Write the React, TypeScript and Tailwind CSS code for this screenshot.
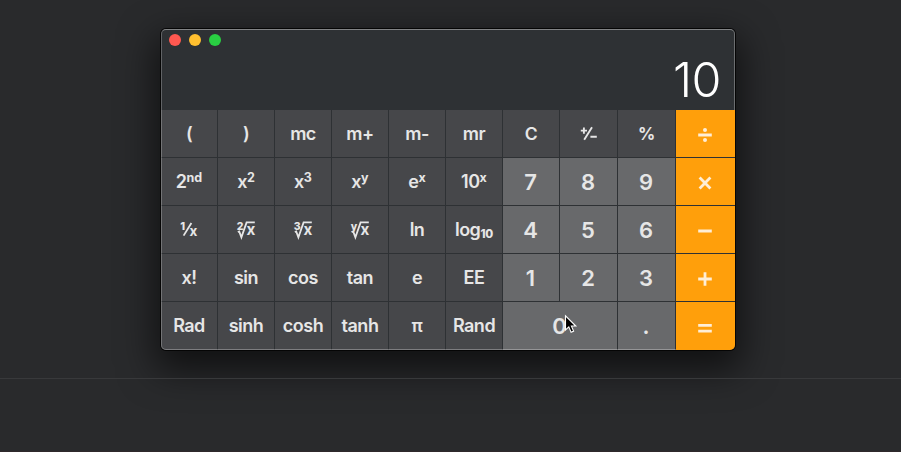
import type { ReactNode } from "react";

function Sup({ base, exp }: { base: string; exp: string }) {
  return (
    <span className="flex items-start">
      <span>{base}</span>
      <span className="-mt-[4px] text-[12.5px] font-bold leading-[18px] tracking-normal">{exp}</span>
    </span>
  );
}

function Root({ index }: { index: string }) {
  return (
    <svg width="20" height="20" viewBox="0 0 20 20" className="overflow-visible tracking-normal">
      <text x="0.8" y="9.6" fontSize="10.5" fontWeight="800" fill="currentColor">{index}</text>
      <path d="M1.8 12 L3.2 11.4 L5.4 17.4 L10.6 2.4 H18.8" fill="none" stroke="currentColor" strokeWidth="1.8" />
      <text x="10.4" y="15" fontSize="16" fontWeight="700" textLength="8.8" lengthAdjust="spacingAndGlyphs" fill="currentColor">x</text>
    </svg>
  );
}

function Reciprocal() {
  return (
    <svg width="20" height="20" viewBox="0 0 20 20" className="overflow-visible tracking-normal">
      <text x="1.2" y="10.4" fontSize="11" fontWeight="800" fill="currentColor">1</text>
      <path d="M4.6 15.6 L12.4 3" stroke="currentColor" strokeWidth="1.8" />
      <text x="10.4" y="15.8" fontSize="13.5" fontWeight="700" fill="currentColor">x</text>
    </svg>
  );
}

function Negate() {
  return (
    <svg width="20" height="20" viewBox="0 0 20 20" fill="none" stroke="currentColor" strokeWidth="1.9">
      <path d="M1.8 6.6 H8 M4.9 3.5 V9.7 M5.2 15.8 L13 3.2 M11.4 12.8 H17.8" />
    </svg>
  );
}

function Operator({ d, dots }: { d: string; dots?: boolean }) {
  return (
    <svg width="20" height="20" viewBox="0 0 20 20" fill="none" stroke="currentColor" strokeWidth="2.8" className="-translate-x-px">
      <path d={d} />
      {dots && (
        <>
          <circle cx="10" cy="5" r="2" fill="currentColor" stroke="none" />
          <circle cx="10" cy="15" r="2" fill="currentColor" stroke="none" />
        </>
      )}
    </svg>
  );
}

type Kind = "fn" | "num" | "op";

const kindClass: Record<Kind, string> = {
  fn: "bg-[#46474a] text-[18px] tracking-[-0.5px] font-semibold",
  num: "bg-[#68696b] text-[22px] font-semibold pr-px",
  op: "bg-[#ff9f0b] text-[#ffeed6] pt-[3px]",
};

const keys: { id: string; label: ReactNode; kind: Kind; wide?: boolean }[] = [
  { id: "open", label: "(", kind: "fn" },
  { id: "close", label: ")", kind: "fn" },
  { id: "mc", label: "mc", kind: "fn" },
  { id: "m+", label: "m+", kind: "fn" },
  { id: "m-", label: "m-", kind: "fn" },
  { id: "mr", label: "mr", kind: "fn" },
  { id: "c", label: <span className="text-[17.5px]">C</span>, kind: "fn" },
  { id: "neg", label: <Negate />, kind: "fn" },
  { id: "pct", label: <span className="pt-px text-[17px] font-bold">%</span>, kind: "fn" },
  { id: "div", label: <Operator d="M3.2 10 H16.8" dots />, kind: "op" },

  { id: "2nd", label: <Sup base="2" exp="nd" />, kind: "fn" },
  { id: "x2", label: <Sup base="x" exp="2" />, kind: "fn" },
  { id: "x3", label: <Sup base="x" exp="3" />, kind: "fn" },
  { id: "xy", label: <Sup base="x" exp="y" />, kind: "fn" },
  { id: "ex", label: <Sup base="e" exp="x" />, kind: "fn" },
  { id: "10x", label: <Sup base="10" exp="x" />, kind: "fn" },
  { id: "7", label: "7", kind: "num" },
  { id: "8", label: "8", kind: "num" },
  { id: "9", label: "9", kind: "num" },
  { id: "mul", label: <Operator d="M4.6 4.6 L15.4 15.4 M15.4 4.6 L4.6 15.4" />, kind: "op" },

  { id: "inv", label: <Reciprocal />, kind: "fn" },
  { id: "r2", label: <Root index="2" />, kind: "fn" },
  { id: "r3", label: <Root index="3" />, kind: "fn" },
  { id: "ry", label: <Root index="y" />, kind: "fn" },
  { id: "ln", label: "ln", kind: "fn" },
  {
    id: "log",
    label: (
      <span className="flex items-end">
        <span>log</span>
        <span className="-mb-[4px] text-[11.5px] font-extrabold leading-[18px] tracking-[-0.2px]">10</span>
      </span>
    ),
    kind: "fn",
  },
  { id: "4", label: "4", kind: "num" },
  { id: "5", label: "5", kind: "num" },
  { id: "6", label: "6", kind: "num" },
  { id: "sub", label: <Operator d="M3.2 10 H16.8" />, kind: "op" },

  { id: "fact", label: "x!", kind: "fn" },
  { id: "sin", label: "sin", kind: "fn" },
  { id: "cos", label: "cos", kind: "fn" },
  { id: "tan", label: "tan", kind: "fn" },
  { id: "e", label: "e", kind: "fn" },
  { id: "ee", label: "EE", kind: "fn" },
  { id: "1", label: "1", kind: "num" },
  { id: "2", label: "2", kind: "num" },
  { id: "3", label: "3", kind: "num" },
  { id: "add", label: <Operator d="M3.2 10 H16.8 M10 3.2 V16.8" />, kind: "op" },

  { id: "rad", label: "Rad", kind: "fn" },
  { id: "sinh", label: "sinh", kind: "fn" },
  { id: "cosh", label: "cosh", kind: "fn" },
  { id: "tanh", label: "tanh", kind: "fn" },
  { id: "pi", label: "π", kind: "fn" },
  { id: "rand", label: "Rand", kind: "fn" },
  { id: "0", label: "0", kind: "num", wide: true },
  { id: "dot", label: ".", kind: "num" },
  { id: "eq", label: <Operator d="M3.2 7.4 H16.8 M3.2 13.2 H16.8" />, kind: "op" },
];

export default function App() {
  return (
    <div className="relative flex h-[452px] w-[901px] flex-col overflow-hidden bg-[#292a2c] pl-[161px] pt-[29px] font-['Inter','Liberation_Sans',sans-serif]">
      <main className="relative flex h-[321px] w-[574px] flex-col rounded-[5px] shadow-[0_0_0_1px_#050505,0_14px_36px_6px_rgba(0,0,0,0.6)]">
        <div className="flex h-full flex-col overflow-hidden rounded-[5px] bg-[#2e3134]">
          <header className="flex h-[81px] shrink-0 justify-between">
            <div className="flex gap-2 pl-2 pt-[5px]">
              <span className="size-3 rounded-full bg-[#ff5850]" />
              <span className="size-3 rounded-full bg-[#ffbf2f]" />
              <span className="size-3 rounded-full bg-[#29cf42]" />
            </div>
            <output className="pr-[14px] pt-[27px] text-[48.5px] font-light leading-[48px] tracking-[-0.5px] text-white">10</output>
          </header>

          <div className="grid flex-1 grid-cols-[56px_56px_56px_56px_56px_56px_56px_57px_57px_59px] grid-rows-[47px_47px_47px_47px_48px] gap-px">
            {keys.map((k) => (
              <button
                key={k.id}
                className={`flex items-center justify-center leading-none text-[#e6e6e6] ${kindClass[k.kind]} ${k.wide ? "col-span-2" : ""}`}
              >
                {k.label}
              </button>
            ))}
          </div>
        </div>
        <div className="pointer-events-none absolute inset-y-0 left-0 right-[59px] rounded-l-[5px] border border-r-0 border-b-white/30 border-l-white/25 border-t-white/40" />
        <div className="pointer-events-none absolute right-0 top-0 h-[81px] w-[59px] rounded-tr-[5px] border-r border-t border-r-white/30 border-t-white/40" />
      </main>

      <div className="absolute inset-x-0 top-[378px] h-px bg-[#38393b]" />
      <div className="absolute inset-x-0 bottom-0 h-px bg-[#2f292b]" />

      <svg className="absolute left-[564px] top-[314px]" width="14" height="20" viewBox="0 0 14 20">
        <path d="M1.5 1.8 V16 L4.8 12.9 L7.1 18.2 L9.6 17.1 L7.4 12 H11.8 Z" fill="#000" stroke="#fff" strokeWidth="1.1" />
      </svg>
    </div>
  );
}
